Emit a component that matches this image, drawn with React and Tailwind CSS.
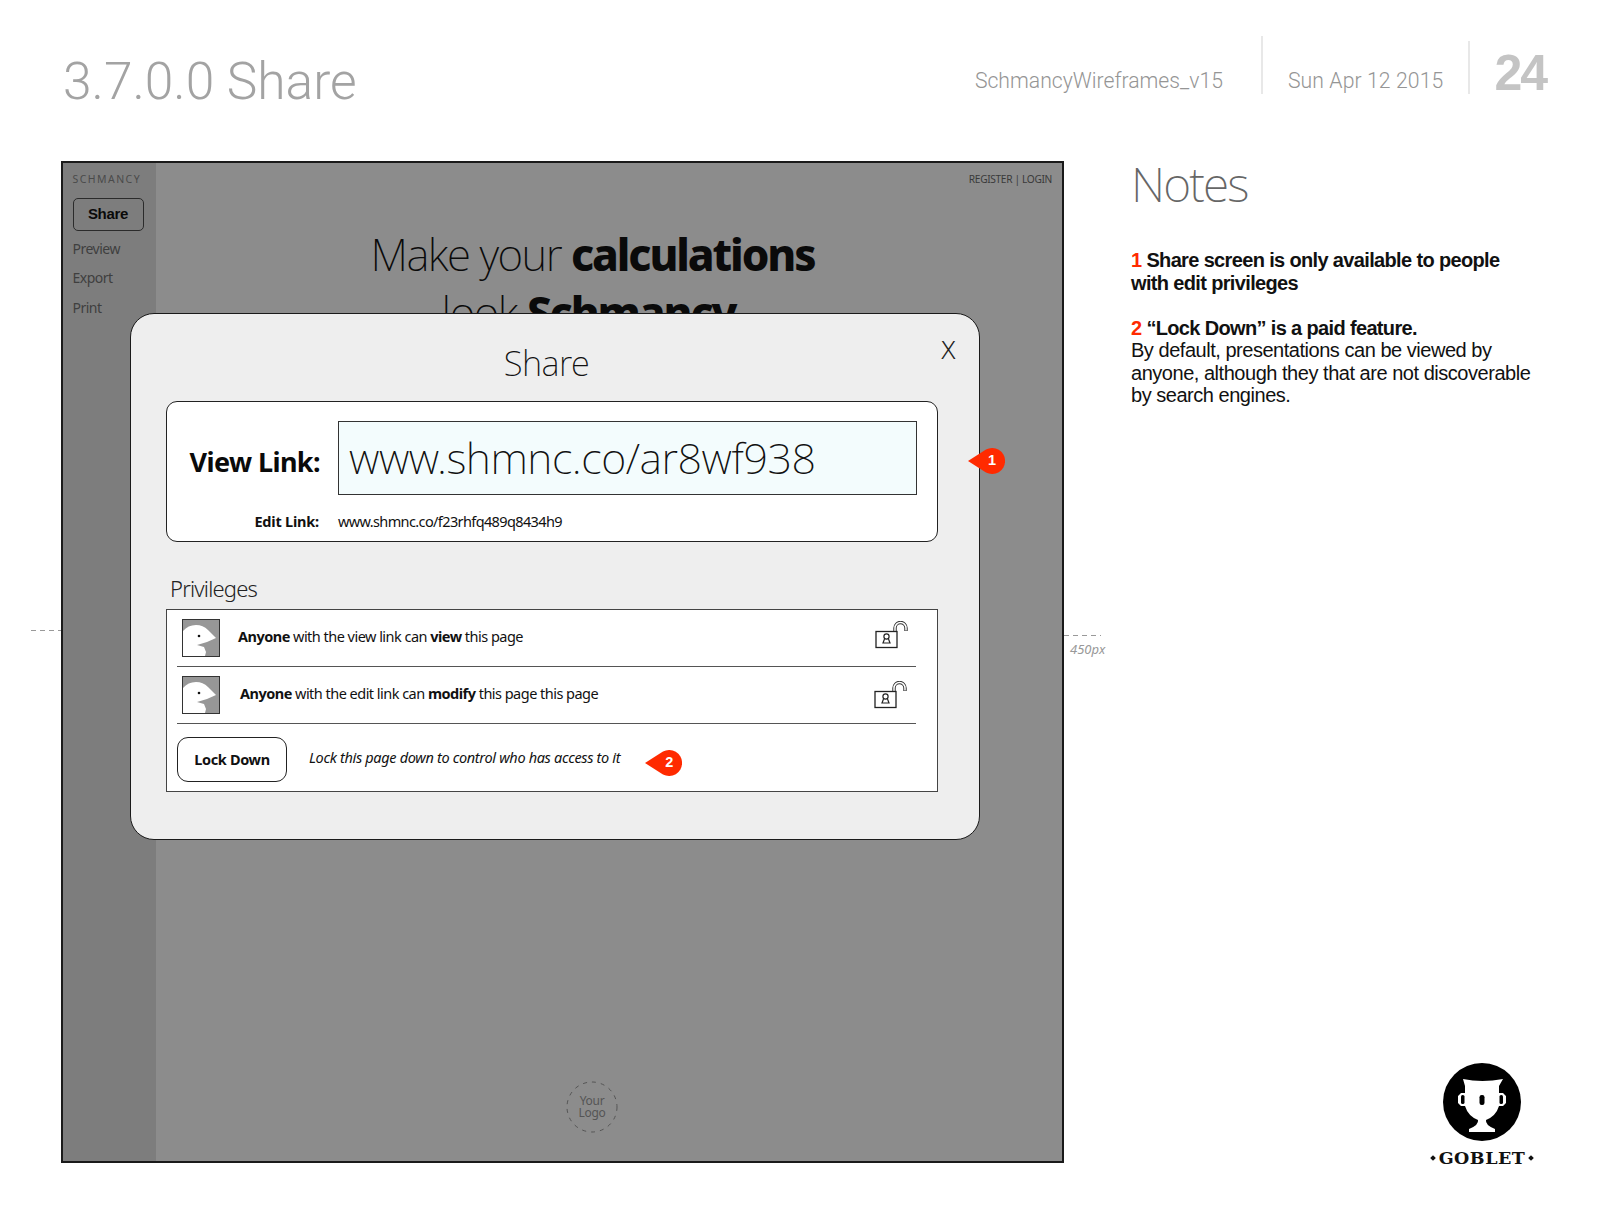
const sans = "font-['Noto_Sans','Open_Sans',sans-serif]";

function Face() {
  return (
    <svg width="38" height="38" viewBox="0 0 38 38" className="shrink-0 block">
      <rect x="0.5" y="0.5" width="37" height="37" fill="#979797" />
      <path d="M1 12 Q6 6 14 6 Q21 6 26 11 L34 19 L25 23 L15 26 L22 28 L24 33 L23 37 L1 37 Z" fill="#fff" />
      <rect x="0.5" y="0.5" width="37" height="37" fill="none" stroke="#333" />
      <circle cx="17" cy="17" r="1.3" fill="#111" />
    </svg>
  );
}

function Lock() {
  return (
    <svg width="34" height="28" viewBox="0 0 34 28" className="block">
      <path d="M20 11 V7 A5.5 5.5 0 0 1 31 7 V10" fill="none" stroke="#333" strokeWidth="3.4" />
      <path d="M20 11 V7 A5.5 5.5 0 0 1 31 7 V9.5" fill="none" stroke="#fff" strokeWidth="1.5" />
      <rect x="1" y="10.5" width="21" height="16" fill="#fff" stroke="#222" strokeWidth="1.3" />
      <circle cx="11.5" cy="15.5" r="2.6" fill="none" stroke="#222" strokeWidth="1.2" />
      <path d="M9.5 18 L8 22 H15 L13.5 18" fill="none" stroke="#222" strokeWidth="1.2" />
    </svg>
  );
}

function Marker({ n }) {
  return (
    <div className="relative w-[37px] h-[26px] shrink-0">
      <svg width="37" height="26" viewBox="0 0 37 26" className="block">
        <path d="M0 13 L18 1.5 A13 13 0 1 1 18 24.5 Z" fill="#ff2a00" />
      </svg>
      <span className="absolute left-[11px] w-[26px] top-0 h-[26px] flex items-center justify-center text-white font-bold text-[14.5px] font-['Liberation_Sans',sans-serif]">{n}</span>
    </div>
  );
}

function Goblet() {
  return (
    <svg width="78" height="78" viewBox="0 0 78 78" className="block">
      <circle cx="39" cy="39" r="39" fill="#000" />
      <path d="M20 16 Q39 20 60 16 L56 23 V30 H60 L63 33 V40 L60 43 H56 Q53 53 43 57 Q42 62 52 66 V69 H26 V66 Q36 62 35 57 Q25 53 22 43 H18 L15 40 V33 L18 30 H22 V23 Z" fill="#fff" />
      <rect x="18" y="32" width="3.5" height="9" rx="1.6" fill="#000" />
      <rect x="36.5" y="32" width="5" height="10" rx="2.2" fill="#000" />
      <rect x="56.5" y="32" width="3.5" height="9" rx="1.6" fill="#000" />
    </svg>
  );
}

function Logo() {
  return (
    <div className="relative w-[52px] h-[52px] flex items-center justify-center text-center text-[12px] leading-[12.5px] text-[#555] tracking-[-0.3px]">
      <svg width="52" height="52" viewBox="0 0 52 52" className="absolute inset-0">
        <circle cx="26" cy="26" r="25" fill="none" stroke="#555" strokeWidth="1" strokeDasharray="4 5" />
      </svg>
      <span>Your<br />Logo</span>
    </div>
  );
}

function PrivRow({ children, offset }) {
  return (
    <div className="h-[57px] flex items-center border-b-[1.5px] border-[#555] ml-[10px] mr-[21px]">
      <div className="pl-[5px]"><Face /></div>
      <p className={`-mt-[2px] text-[14.5px] tracking-[-0.52px] text-[#111] ${offset}`}>{children}</p>
    </div>
  );
}

export default function App() {
  return (
    <div className="relative w-[1600px] h-[1225px] bg-white overflow-hidden font-['Liberation_Sans',sans-serif]">
      {/* header */}
      <header className="flex items-end h-[161px] pb-[49px] pl-[63px] pr-[54px]">
        <h1 className="text-[51.5px] leading-[60px] text-[#a3a3a3] font-['Roboto',sans-serif] font-light">3.7.0.0 Share</h1>
        <div className="ml-auto flex items-end mb-[18px] text-[21.2px] text-[#959595] font-['Roboto',sans-serif] font-light">
          <span className="leading-[26px]">SchmancyWireframes_v15</span>
          <span className="ml-[38px] w-[2px] h-[58px] bg-[#e8e8e8]"></span>
          <span className="ml-[25px] leading-[26px] tracking-[0.1px]">Sun Apr 12 2015</span>
          <span className="ml-[25px] w-[2px] h-[53px] bg-[#e8e8e8]"></span>
          <span className="ml-[24px] -mb-[4px] text-[50px] leading-[50px] font-bold tracking-[-2px] text-[#c4c4c4] font-['Liberation_Sans',sans-serif]">24</span>
        </div>
      </header>

      <div className="flex pl-[61px]">
        {/* wireframe */}
        <div className="relative w-[1003px] h-[1002px] border-2 border-[#1a1a1a] bg-[#8c8c8c] flex">
          <aside className={`w-[93px] bg-[#7d7d7d] shrink-0 pl-[9.5px] pt-[9px] ${sans}`}>
            <div className="text-[10.5px] leading-[14px] tracking-[1.45px] text-[#4a4a4a]">SCHMANCY</div>
            <div className="mt-[12px] w-[71px] h-[33px] rounded-[5px] border-[1.5px] border-[#2b2b2b] flex items-center justify-center text-[15px] font-bold text-[#0a0a0a] font-['Liberation_Sans',sans-serif] tracking-[-0.3px]">Share</div>
            <div className="mt-[9px] flex flex-col gap-[11px] text-[14px] leading-[18px] tracking-[-0.5px] text-[#3f3f3f]">
              <span>Preview</span>
              <span>Export</span>
              <span className="mt-[1px]">Print</span>
            </div>
          </aside>
          <main className={`relative flex-1 ${sans}`}>
            <div className="text-right text-[10.2px] tracking-[-0.35px] leading-[14px] pt-[9px] pr-[10px] text-[#3a3a3a]">REGISTER | LOGIN</div>
            <div className="text-center mt-[39px] ml-[-33px] text-[44px] leading-[58px] tracking-[-1.5px] text-[#0a0a0a] font-extralight">
              <div>Make your <b className="font-extrabold tracking-[-2.1px]">calculations</b></div>
              <div className="pr-[8px]">look <b className="font-extrabold tracking-[-2.1px]">Schmancy</b></div>
            </div>
            <div className="absolute inset-x-0 bottom-[28px] flex justify-center pr-[34px]">
              <Logo />
            </div>
          </main>

          {/* modal */}
          <div className={`absolute left-[67px] top-[150px] w-[850px] h-[527px] rounded-[24px] border-[1.5px] border-[#1a1a1a] bg-[#eeeeee] ${sans}`}>
            <div className="relative h-[87px] flex items-center justify-center pt-[10px] pr-[17px] text-[34.5px] tracking-[-0.5px] font-extralight text-[#111]">
              Share
              <span className="absolute right-[24px] top-[17px] text-[26px] leading-[36px] font-light text-[#222]">X</span>
            </div>
            <div className="relative ml-[35px] w-[772px] h-[141px] bg-white rounded-[11px] border-[1.5px] border-[#222] pl-[21px] pr-[20px] pt-[19px]">
              <div className="flex items-center gap-[18px]">
                <span className="w-[132px] shrink-0 mt-[8px] text-[27px] font-bold tracking-[-0.6px] text-[#0a0a0a] whitespace-nowrap flex justify-end">View Link:</span>
                <div className="flex-1 h-[74px] bg-[#f3fcfd] border-[1.5px] border-[#333] flex items-center pl-[10px] text-[43px] tracking-[-0.45px] font-extralight text-[#111]">www.shmnc.co/ar8wf938</div>
              </div>
              <div className="flex items-center gap-[19px] mt-[16px]">
                <span className="w-[131px] shrink-0 text-right text-[14.5px] font-bold tracking-[-0.2px] text-[#111]">Edit Link:</span>
                <span className="text-[14.5px] tracking-[-0.62px] text-[#111]">www.shmnc.co/f23rhfq489q8434h9</span>
              </div>
              <div className="absolute left-[801px] top-[46px]"><Marker n="1" /></div>
            </div>
            <div className="ml-[39px] mt-[31px] text-[22px] leading-[30px] tracking-[-0.8px] text-[#222] font-light">Privileges</div>
            <div className="relative ml-[35px] mt-[6px] w-[772px] h-[183px] bg-white border-[1.5px] border-[#444]">
              <PrivRow offset="ml-[18px]">
                <b className="font-bold">Anyone</b> with the view link can <b className="font-bold">view</b> this page
              </PrivRow>
              <PrivRow offset="ml-[20px]">
                <b className="font-bold">Anyone</b> with the edit link can <b className="font-bold">modify</b> this page this page
              </PrivRow>
              <div className="absolute right-[28px] top-[11px]"><Lock /></div>
              <div className="absolute right-[29px] top-[71px]"><Lock /></div>
              <div className="flex items-center ml-[10px] mt-[13px]">
                <div className="w-[110px] h-[45px] rounded-[11px] border-[1.5px] border-[#222] flex items-center justify-center text-[14.5px] font-bold tracking-[-0.35px] text-[#111]">Lock Down</div>
                <p className="ml-[22px] mb-[4px] text-[14.5px] italic tracking-[-0.33px] text-[#111]">Lock this page down to control who has access to it</p>
                <div className="ml-[25px] mt-[6px]"><Marker n="2" /></div>
              </div>
            </div>
          </div>
        </div>

        {/* dimension marks */}
        <div className="absolute left-[31px] top-[630px] w-[30px] h-px bg-[repeating-linear-gradient(90deg,#999_0_5px,transparent_5px_9px)]"></div>
        <div className="absolute left-[1064px] top-[635px] w-[37px] h-px bg-[repeating-linear-gradient(90deg,#999_0_5px,transparent_5px_9px)]"></div>
        <span className={`absolute left-[1070px] top-[640px] text-[13px] italic text-[#999] ${sans}`}>450px</span>

        {/* notes */}
        <aside className="ml-[67px] w-[420px] flex flex-col h-[1003px]">
          <h2 className={`text-[48px] leading-[60px] mt-[-7px] tracking-[-1.9px] font-extralight text-[#666] ${sans}`}>Notes</h2>
          <div className="mt-[35px] text-[20px] leading-[22.5px] text-[#111] tracking-[-0.47px]">
            <p className="font-bold tracking-[-0.65px]"><span className="text-[#ff2a00]">1</span> Share screen is only available to people<br />with edit privileges</p>
            <p className="mt-[22.5px]"><b className="font-bold tracking-[-0.65px]"><span className="text-[#ff2a00]">2</span> “Lock Down” is a paid feature.</b><br />By default, presentations can be viewed by<br />anyone, although they that are not discoverable<br />by search engines.</p>
          </div>
          <div className="mt-auto ml-[297px] mb-[-5px] flex flex-col items-center w-[108px]">
            <Goblet />
            <div className="mt-[6px] flex items-center gap-[4px] text-[17.5px] leading-[22px] font-bold tracking-[0.5px] text-[#111] font-['DejaVu_Serif',serif]">
              <span className="w-[4px] h-[4px] rotate-45 bg-[#111]"></span>GOBLET<span className="w-[4px] h-[4px] rotate-45 bg-[#111]"></span>
            </div>
          </div>
        </aside>
      </div>
    </div>
  );
}
